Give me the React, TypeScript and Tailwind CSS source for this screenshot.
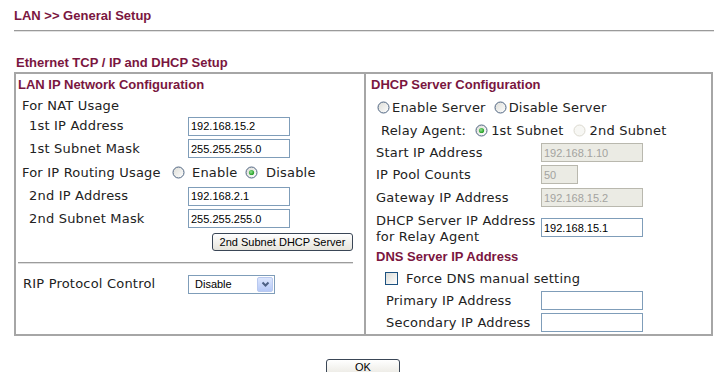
import React from "react";

const head = "font-['Liberation_Sans',Arial,sans-serif] text-[13px] font-bold text-[#7a1640] leading-[16px]";
const label = "font-['DejaVu_Sans',Verdana,sans-serif] text-[13px] tracking-[0.2px] text-[#222] leading-[16px] whitespace-nowrap";

function Radio({ checked = false, disabled = false }: { checked?: boolean; disabled?: boolean }) {
  return (
    <svg width="13" height="13" viewBox="0 0 13 13" className="shrink-0" aria-hidden>
      <defs>
        <linearGradient id="rfill" x1="0" y1="0" x2="1" y2="1">
          <stop offset="0" stopColor="#dcdcd6" />
          <stop offset="1" stopColor="#ffffff" />
        </linearGradient>
        <radialGradient id="rdot" cx="0.4" cy="0.4" r="0.6">
          <stop offset="0" stopColor="#8fe38f" />
          <stop offset="1" stopColor="#219b21" />
        </radialGradient>
      </defs>
      <circle
        cx="6.5"
        cy="6.5"
        r="5.5"
        fill={disabled ? "#f7f7f4" : "url(#rfill)"}
        stroke={disabled ? "#dcdad0" : "#4f6582"}
        strokeWidth="1"
      />
      {checked && <circle cx="6.5" cy="6.5" r="2.6" fill="url(#rdot)" />}
    </svg>
  );
}

function Field({ value = "", small = false, disabled = false }: { value?: string; small?: boolean; disabled?: boolean }) {
  return (
    <input
      readOnly
      disabled={disabled}
      defaultValue={value}
      className={
        (small ? "w-[37px] " : "w-[102px] ") +
        (disabled
          ? "border-[#b9b8ae] bg-[#ebebe4] text-[#a3a3a0] "
          : "border-[#7f9db9] bg-white text-black ") +
        "h-[19px] shrink-0 border px-[2px] font-['Liberation_Sans',Arial,sans-serif] text-[11px] outline-none"
      }
    />
  );
}

function XpButton({ children, wide = false }: { children: React.ReactNode; wide?: boolean }) {
  return (
    <button
      className={
        (wide ? "h-[18px] w-[141px] " : "h-[20px] w-[74px] pb-[4px] ") +
        "rounded-[3px] border border-[#3a4656] bg-gradient-to-b from-white to-[#e6e4dc] font-['Liberation_Sans',Arial,sans-serif] text-[11px] leading-[14px] text-black"
      }
    >
      {children}
    </button>
  );
}

function LeftRow({ text, value, h }: { text: string; value: string; h: string }) {
  return (
    <div className={"flex items-center " + h}>
      <span className={"w-[172px] pl-[13px] " + label}>{text}</span>
      <Field value={value} />
    </div>
  );
}

function RightRow({ text, value, h, small, disabled, deep }: { text: string; value?: string; h: string; small?: boolean; disabled?: boolean; deep?: boolean }) {
  return (
    <div className={"flex items-center " + h}>
      <span className={(deep ? "pl-[20px] " : "pl-[10px] ") + "w-[175px] " + label}>{text}</span>
      <Field value={value} small={small} disabled={disabled} />
    </div>
  );
}

function SelectBox() {
  return (
    <div className="flex h-[19px] w-[87px] items-center justify-between border border-[#7f9db9] bg-white pl-[6px] pr-[1px]">
      <span className="font-['Liberation_Sans',Arial,sans-serif] text-[11px] text-black">Disable</span>
      <span className="flex h-[15px] w-[16px] items-center justify-center rounded-[2px] border border-[#b9c9ef] bg-gradient-to-b from-[#dce6fd] to-[#b6c9f7]">
        <svg width="9" height="7" viewBox="0 0 9 7" aria-hidden>
          <path d="M1.5 1.5 L4.5 4.5 L7.5 1.5" fill="none" stroke="#4d6185" strokeWidth="2" />
        </svg>
      </span>
    </div>
  );
}

export default function App() {
  return (
    <div className="h-[372px] w-[715px] overflow-hidden bg-white pl-[14px]">
      <div className={head + " pt-[8px]"}>LAN &gt;&gt; General Setup</div>
      <div className="mt-[6px] h-[2px] w-[700px] border-t border-b border-t-[#9a9a9a] border-b-[#e2e2e2]" />

      <div className={head + " mt-[23px] pl-[2px]"}>Ethernet TCP / IP and DHCP Setup</div>

      <div className="mt-[1px] flex h-[264px] w-[699px] border-2 border-[#a6a6a6]">
        {/* LAN IP */}
        <div className="w-[348px] shrink-0">
          <div className={head + " flex h-[22px] items-center pl-[2px]"}>LAN IP Network Configuration</div>
          <div className={"flex h-[19px] items-center pl-[6px] " + label}>For NAT Usage</div>
          <LeftRow text="1st IP Address" value="192.168.15.2" h="h-[22px]" />
          <LeftRow text="1st Subnet Mask" value="255.255.255.0" h="h-[23px]" />
          <div className="flex h-[25px] items-center">
            <span className={"w-[156px] pl-[6px] " + label}>For IP Routing Usage</span>
            <Radio />
            <span className={"ml-[7px] w-[53px] " + label}>Enable</span>
            <Radio checked />
            <span className={"ml-[8px] " + label}>Disable</span>
          </div>
          <LeftRow text="2nd IP Address" value="192.168.2.1" h="h-[22px]" />
          <LeftRow text="2nd Subnet Mask" value="255.255.255.0" h="h-[23px]" />
          <div className="flex h-[23px] items-center justify-end pr-[11px]">
            <XpButton wide>2nd Subnet DHCP Server</XpButton>
          </div>
          <div className="flex h-[20px] items-center pl-[2px]">
            <div className="h-[2px] w-[335px] border-t border-b border-t-[#9c9c9c] border-b-[#dedede]" />
          </div>
          <div className="flex h-[22px] items-center">
            <span className={"w-[172px] pl-[7px] " + label}>RIP Protocol Control</span>
            <SelectBox />
          </div>
        </div>

        {/* DHCP */}
        <div className="flex-1 border-l-2 border-[#a6a6a6]">
          <div className={head + " flex h-[22px] items-center pl-[5px]"}>DHCP Server Configuration</div>
          <div className="flex h-[23px] items-center pl-[11px]">
            <Radio />
            <span className={"ml-[2px] " + label}>Enable Server</span>
            <span className="ml-[8px]">
              <Radio />
            </span>
            <span className={"ml-[2px] " + label}>Disable Server</span>
          </div>
          <div className="flex h-[23px] items-center pl-[15px]">
            <span className={label}>Relay Agent:</span>
            <span className="ml-[9px]">
              <Radio checked />
            </span>
            <span className={"ml-[3px] " + label}>1st Subnet</span>
            <span className="ml-[10px]">
              <Radio disabled />
            </span>
            <span className={"ml-[3px] " + label}>2nd Subnet</span>
          </div>
          <RightRow text="Start IP Address" value="192.168.1.10" h="h-[21px]" disabled />
          <RightRow text="IP Pool Counts" value="50" h="h-[23px]" small disabled />
          <RightRow text="Gateway IP Address" value="192.168.15.2" h="h-[23px]" disabled />
          <div className="flex h-[37px] items-center">
            <div className={"w-[175px] pl-[10px] pt-[2px] " + label}>
              DHCP Server IP Address
              <br />
              for Relay Agent
            </div>
            <Field value="192.168.15.1" />
          </div>
          <div className={head + " flex h-[21px] items-center pl-[10px]"}>DNS Server IP Address</div>
          <div className="flex h-[23px] items-center pl-[19px]">
            <span className="h-[13px] w-[13px] shrink-0 border border-[#1c5180] bg-gradient-to-br from-[#dcdcd7] to-white" />
            <span className={"ml-[8px] " + label}>Force DNS manual setting</span>
          </div>
          <RightRow text="Primary IP Address" h="h-[21px]" deep />
          <RightRow text="Secondary IP Address" h="h-[23px]" deep />
        </div>
      </div>

      <div className="mt-[17px] flex w-[699px] justify-center">
        <div className="ml-[-1px]">
          <XpButton>OK</XpButton>
        </div>
      </div>
    </div>
  );
}
